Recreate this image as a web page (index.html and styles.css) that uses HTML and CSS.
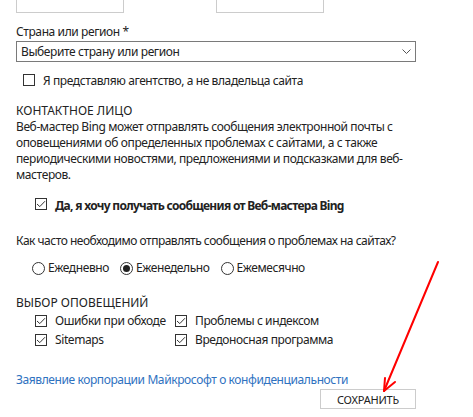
FILE: index.html
```html
<!DOCTYPE html>
<html lang="ru">
<head>
  <meta charset="UTF-8">
  <title>Профиль - Веб-мастер Bing</title>
  <link rel="stylesheet" href="styles.css">
</head>
<body>
  <div class="page">
    <!-- Имя и фамилия (верх формы) -->
    <div class="name-row">
      <div class="text-box"></div>
      <div class="text-box"></div>
    </div>

    <div class="field-label">Страна или регион *</div>
    <div class="select">
      <span>Выберите страну или регион</span>
      <svg class="chevron" width="9" height="5" viewBox="0 0 9 5"><polyline points="0.5,0.5 4.5,4.5 8.5,0.5" fill="none" stroke="#555" stroke-width="1"/></svg>
    </div>

    <label class="check-row agency">
      <span class="box"></span>
      <span>Я представляю агентство, а не владельца сайта</span>
    </label>

    <!-- Контактное лицо -->
    <h2 class="section-title">КОНТАКТНОЕ ЛИЦО</h2>
    <p class="note">Веб-мастер Bing может отправлять сообщения электронной почты с<br>оповещениями об определенных проблемах с сайтами, а с также<br>периодическими новостями, предложениями и подсказками для веб-<br>мастеров.</p>

    <label class="check-row opt-in">
      <span class="box checked"><svg width="12" height="12" viewBox="0 0 12 12"><polyline points="2,6 4.8,8.6 10,3.2" fill="none" stroke="#333" stroke-width="1"/></svg></span>
      <span class="strong">Да, я хочу получать сообщения от Веб-мастера Bing</span>
    </label>

    <div class="question">Как часто необходимо отправлять сообщения о проблемах на сайтах?</div>
    <div class="radios">
      <label class="radio"><span class="dot"></span>Ежедневно</label>
      <label class="radio"><span class="dot selected"></span>Еженедельно</label>
      <label class="radio"><span class="dot"></span>Ежемесячно</label>
    </div>

    <!-- Выбор оповещений -->
    <h2 class="section-title alerts">ВЫБОР ОПОВЕЩЕНИЙ</h2>
    <div class="alert-grid">
      <label class="check-row"><span class="box checked"><svg width="12" height="12" viewBox="0 0 12 12"><polyline points="2,6 4.8,8.6 10,3.2" fill="none" stroke="#333" stroke-width="1"/></svg></span><span>Ошибки при обходе</span></label>
      <label class="check-row"><span class="box checked"><svg width="12" height="12" viewBox="0 0 12 12"><polyline points="2,6 4.8,8.6 10,3.2" fill="none" stroke="#333" stroke-width="1"/></svg></span><span>Проблемы с индексом</span></label>
      <label class="check-row"><span class="box checked"><svg width="12" height="12" viewBox="0 0 12 12"><polyline points="2,6 4.8,8.6 10,3.2" fill="none" stroke="#333" stroke-width="1"/></svg></span><span>Sitemaps</span></label>
      <label class="check-row"><span class="box checked"><svg width="12" height="12" viewBox="0 0 12 12"><polyline points="2,6 4.8,8.6 10,3.2" fill="none" stroke="#333" stroke-width="1"/></svg></span><span>Вредоносная программа</span></label>
    </div>

    <a href="#" class="privacy-link">Заявление корпорации Майкрософт о конфиденциальности</a>
    <div class="actions">
      <button class="save-button">СОХРАНИТЬ</button>
    </div>
  </div>

  <!-- Красная стрелка поверх страницы -->
  <svg class="arrow" width="473" height="417" viewBox="0 0 473 417">
    <line x1="438" y1="262" x2="384" y2="391" stroke="#f00" stroke-width="2" stroke-linecap="round"/>
    <polyline points="385,378 384,391 395,382" fill="none" stroke="#f00" stroke-width="2" stroke-linecap="round" stroke-linejoin="round"/>
  </svg>
</body>
</html>
```

FILE: styles.css
```css
* { margin: 0; padding: 0; box-sizing: border-box; }
body {
  font-family: "Noto Sans", "Open Sans", sans-serif;
  font-size: 12px;
  line-height: 16px;
  letter-spacing: -0.4px;
  color: #222;
  background-color: #fff;
  position: relative;
  overflow: hidden;
}
.page {
  width: 416px;
  padding-left: 16px;
}
.name-row {
  display: flex;
  gap: 92px;
  margin-top: -13px;
}
.text-box {
  width: 108px;
  height: 26px;
  border: 1px solid #ccc;
}
.field-label {
  margin-top: 11px;
}
.select {
  margin-top: 1px;
  height: 21px;
  border: 1px solid #7a7a7a;
  padding: 2px 4px 1px 4px;
  display: flex;
  align-items: flex-start;
  justify-content: space-between;
}
.chevron {
  margin-top: 5px;
}
.check-row {
  display: flex;
  align-items: flex-start;
  gap: 8px;
}
.box {
  width: 12px;
  height: 12px;
  border: 1px solid #333;
  margin-top: 2px;
  flex-shrink: 0;
  position: relative;
}
.box svg {
  position: absolute;
  left: -1px;
  top: -1px;
}
.agency {
  margin-top: 11px;
  padding-left: 7px;
}
.agency .box {
  margin-top: 1px;
}
.section-title {
  font-size: 12px;
  font-weight: normal;
  letter-spacing: 0;
  margin-top: 14px;
}
.opt-in {
  margin-top: 15px;
  padding-left: 19px;
}
.opt-in .box {
  margin-top: 0;
}
.strong {
  font-weight: bold;
  letter-spacing: -0.7px;
}
.question {
  margin-top: 19px;
  letter-spacing: -0.5px;
}
.radios {
  margin-top: 11px;
  padding-left: 16px;
  display: flex;
  gap: 11px;
}
.radio {
  display: flex;
  align-items: flex-start;
  gap: 3px;
}
.dot {
  width: 13px;
  height: 13px;
  border: 1px solid #333;
  border-radius: 50%;
  margin-top: 2px;
  position: relative;
}
.dot.selected::after {
  content: "";
  position: absolute;
  left: 2px;
  top: 2px;
  width: 7px;
  height: 7px;
  border-radius: 50%;
  background-color: #222;
}
.alerts {
  margin-top: 19px;
}
.alert-grid {
  margin-top: 2px;
  padding-left: 19px;
  display: grid;
  grid-template-columns: 140px auto;
  row-gap: 3px;
}
.privacy-link {
  display: block;
  margin-top: 24px;
  color: #2f72bf;
  text-decoration: none;
}
.actions {
  display: flex;
  justify-content: flex-end;
  margin-top: 1px;
}
.save-button {
  width: 96px;
  height: 20px;
  border: 1px solid #ccc;
  background-color: #fff;
  font-family: inherit;
  font-size: 11px;
  letter-spacing: -0.2px;
  color: #222;
  line-height: 16px;
  padding-top: 1px;
}
.arrow {
  position: absolute;
  left: 0;
  top: 0;
  pointer-events: none;
}
```
